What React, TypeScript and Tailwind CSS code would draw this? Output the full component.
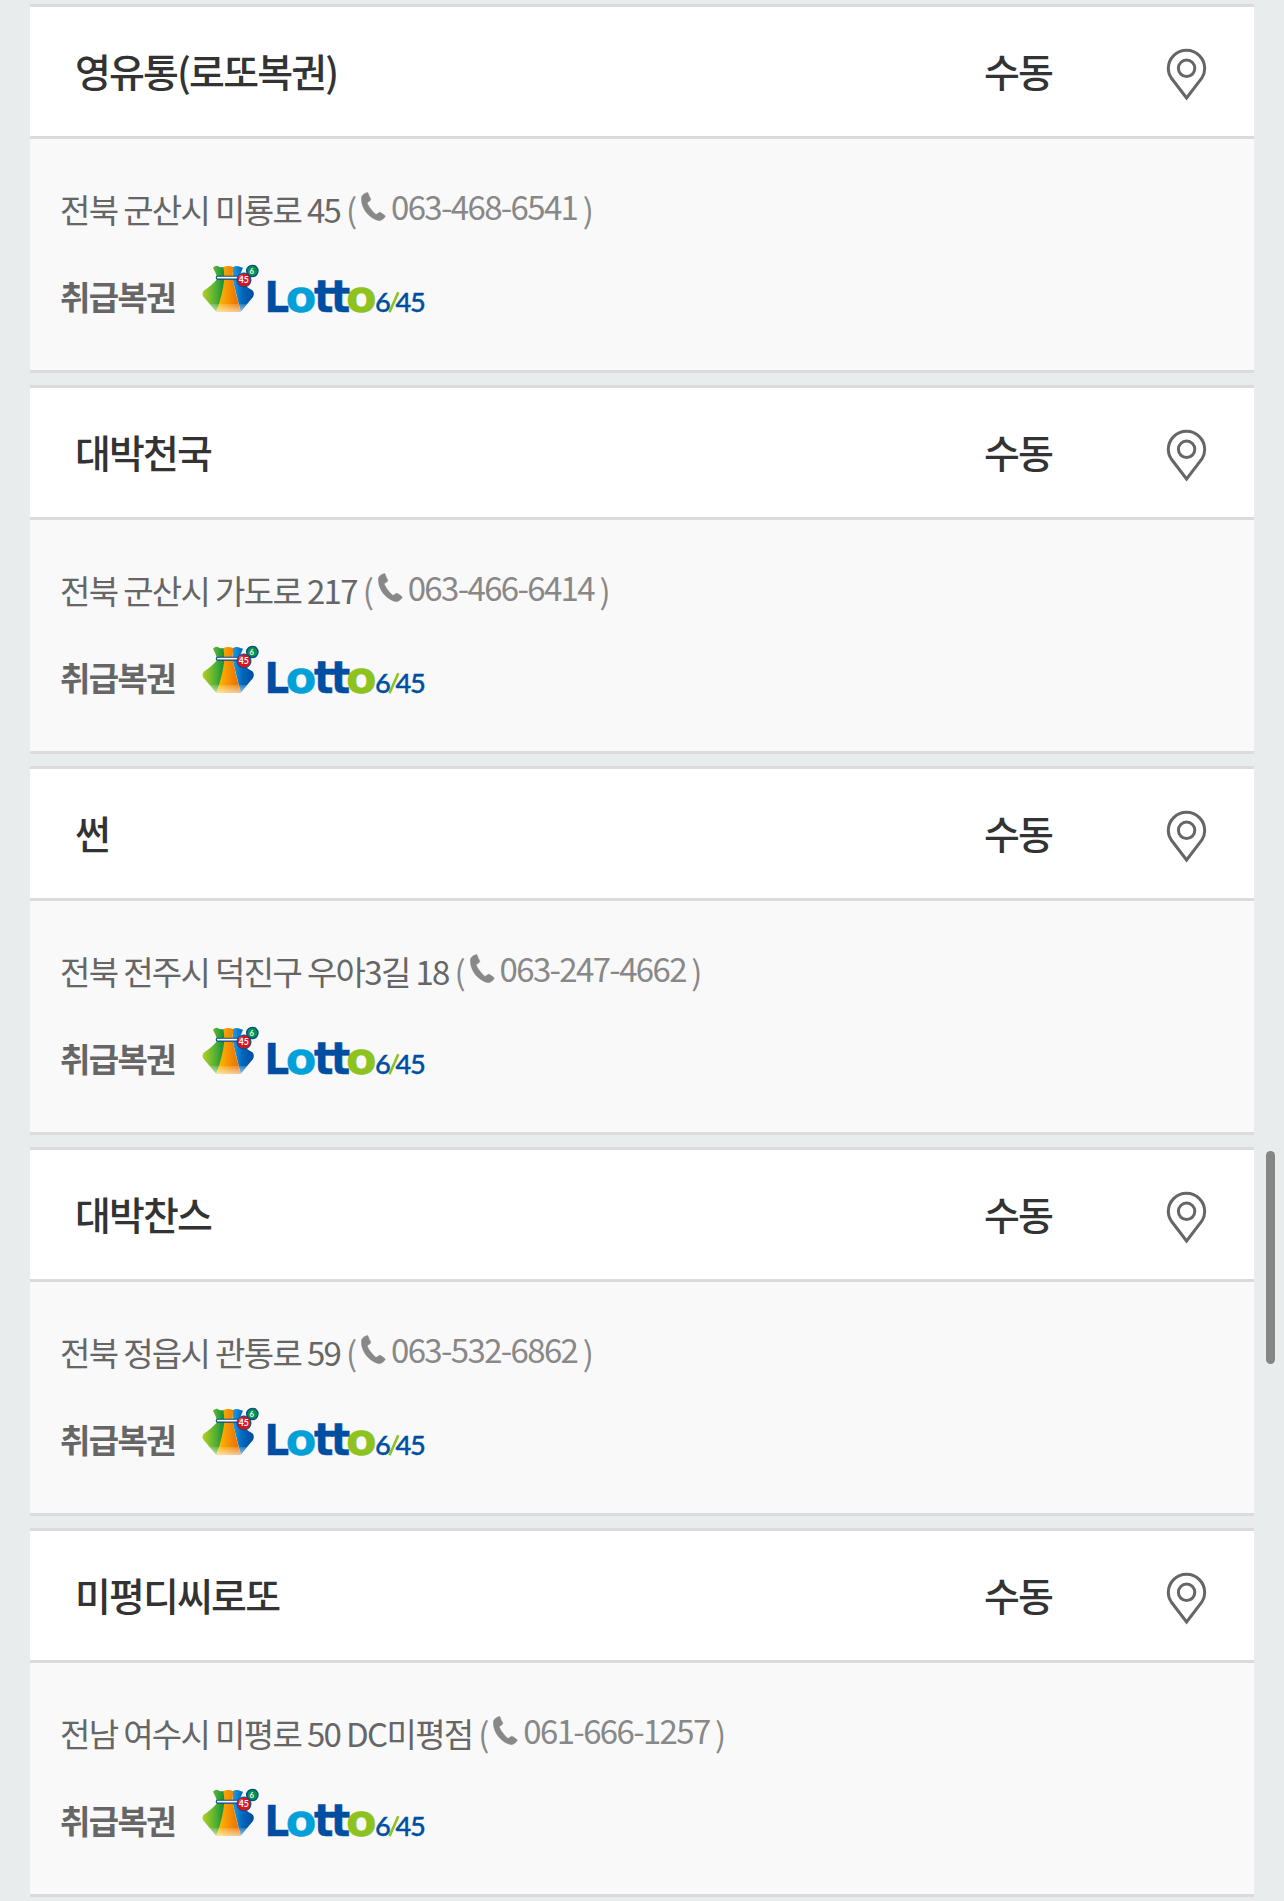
type Store = { name: string; address: string; phone: string };

const stores: Store[] = [
  { name: "영유통(로또복권)", address: "전북 군산시 미룡로 45", phone: "063-468-6541" },
  { name: "대박천국", address: "전북 군산시 가도로 217", phone: "063-466-6414" },
  { name: "썬", address: "전북 전주시 덕진구 우아3길 18", phone: "063-247-4662" },
  { name: "대박찬스", address: "전북 정읍시 관통로 59", phone: "063-532-6862" },
  { name: "미평디씨로또", address: "전남 여수시 미평로 50 DC미평점", phone: "061-666-1257" },
];

function PinIcon() {
  return (
    <svg className="mt-[7px] h-[54px] w-[42px]" viewBox="0 0 42 54" fill="none" stroke="#666" strokeWidth="3">
      <path d="M20.6 50 L5.3 30 C3.2 27 2.3 24 2.3 20.5 A18.2 18.2 0 0 1 38.7 20.5 C38.7 24 37.9 27 35.9 30 Z" />
      <circle cx="20.6" cy="20.3" r="8.2" />
    </svg>
  );
}

function PhoneIcon() {
  return (
    <svg className="mt-[3px] h-[30px] w-[25px] shrink-0" viewBox="33 22 75 90" fill="#888" stroke="#888" strokeWidth="1.5">
      <path d="M34 42 C34 34 39 27 50 24 Q54 22 55 27 C56 32 60 38 62 42 Q63 46 60 48 C56 51 52 52 52 56 C56 66 67 80 76 88 C80 90 83 86 88 83 C93 83 100 89 105 93 Q107 95 104 98 C100 104 94 107 88 108 C65 104 35 80 34 42 Z" />
    </svg>
  );
}

function LottoLogo() {
  return (
    <svg className="h-[64px] w-[232px] overflow-visible" viewBox="0 0 232 64">
      <defs>
        <linearGradient id="bagGreen" x1="0" x2="1">
          <stop offset="0" stopColor="#b4cf22" />
          <stop offset="0.6" stopColor="#4fae35" />
          <stop offset="1" stopColor="#078a3c" />
        </linearGradient>
        <linearGradient id="bagOrange" x1="0" x2="1">
          <stop offset="0" stopColor="#ffc400" />
          <stop offset="0.5" stopColor="#f49200" />
          <stop offset="1" stopColor="#e96a00" />
        </linearGradient>
        <linearGradient id="bagBlue" x1="0" x2="1">
          <stop offset="0" stopColor="#1fa0e6" />
          <stop offset="0.45" stopColor="#0068bd" />
          <stop offset="1" stopColor="#004a9c" />
        </linearGradient>
        <linearGradient id="bagShine" x1="0" x2="0" y1="0" y2="1">
          <stop offset="0" stopColor="#fff" stopOpacity="0.15" />
          <stop offset="1" stopColor="#fff" stopOpacity="0.6" />
        </linearGradient>
      </defs>
      <g transform="translate(0 -4) scale(0.33333)">
        <path d="M39 29 Q48 20 57 26 Q65 30 74 26 L76 60 Q72 110 49 161 L11 117 Q4 108 11 98 Q38 80 52 62 Q48 44 39 29Z" fill="url(#bagGreen)" />
        <path d="M98 28 Q110 20 121 27 L129 29 Q122 46 116 60 Q130 82 157 97 Q165 106 159 117 L122 161 L98 64Z" fill="url(#bagBlue)" />
        <path d="M70 28 Q84 20 100 28 Q97 45 98 62 Q108 110 122 161 H49 Q68 110 73 62 Q73 44 70 28Z" fill="url(#bagOrange)" />
        <path d="M29 138 H141 L122 161 H49Z" fill="url(#bagShine)" />
        <path d="M53 59 H112" stroke="#004a8f" strokeWidth="12" strokeLinecap="round" />
        <path d="M53 59 H112" stroke="#fff" strokeWidth="5" strokeLinecap="round" />
        <circle cx="157" cy="39" r="17" fill="#06924b" stroke="#004a8f" strokeWidth="4" />
        <circle cx="132" cy="66" r="21" fill="#d9141e" stroke="#004a8f" strokeWidth="3" />
        <circle cx="123" cy="57" r="7" fill="#fff" opacity="0.25" />
        <g fill="#fff" fontFamily="Lato" fontWeight="700" textAnchor="middle">
          <text x="155" y="47" fontSize="23" letterSpacing="0">6</text>
          <text x="131" y="75" fontSize="26" letterSpacing="0">45</text>
        </g>
      </g>
      <g fontFamily="DejaVu Sans" fontWeight="700" fill="#004ea2" stroke="#004ea2" strokeWidth="0.4" strokeLinejoin="round" letterSpacing="0">
        <text transform="translate(64.4 50) scale(0.9 1)" fontSize="43">L</text>
        <text transform="translate(114 50) scale(0.92 1)" fontSize="44.3" letterSpacing="-2.9">tt</text>
        <text x="85.8" y="49.6" fontSize="44.6" fill="#00a0d9" stroke="#00a0d9">o</text>
        <text x="145.9" y="49.6" fontSize="44.6" fill="#8dc21f" stroke="#8dc21f">o</text>
      </g>
      <g fontFamily="Lato" fontWeight="500" fill="#004ea2" stroke="#004ea2" strokeWidth="0.35" fontSize="27.3" letterSpacing="0">
        <text x="174.9" y="49.8">6</text>
        <text x="195.4" y="49.8">4</text>
        <text x="209.9" y="49.8">5</text>
      </g>
      <path d="M189.5 50.3 L198.3 30.3" stroke="#8dc21f" strokeWidth="2.6" />
    </svg>
  );
}

function StoreCard({ name, address, phone }: Store) {
  return (
    <article className="border-y-[3px] border-[#dbdbdb] bg-[#f9f9f9]">
      <header className="flex h-[132px] items-center border-b-[3px] border-[#dbdbdb] bg-white pl-[45px] pr-[46px] text-[39px] font-medium tracking-[-1.85px] text-[#333]">
        <h2 className="flex-1 pb-0.5">{name}</h2>
        <span className="w-[182px] pb-0.5">수동</span>
        <PinIcon />
      </header>
      <div className="h-[231px] pl-[30px] pt-[45px] text-[33px] leading-[48px] tracking-[-1.65px] text-[#666]">
        <div className="flex h-[49px] items-center whitespace-pre">
          <span>{address} </span>
          <span className="text-[#888]">(</span>
          <span className="flex items-center gap-[5px] pb-[6px] pl-[5.5px] pr-[5.5px] text-[#888]">
            <PhoneIcon />
            {phone}
          </span>
          <span className="text-[#888]">)</span>
        </div>
        <div className="mt-[29px] flex h-[64px] items-start">
          <strong className="w-[140px] pt-[10px] font-bold">취급복권</strong>
          <LottoLogo />
        </div>
      </div>
    </article>
  );
}

export default function App() {
  return (
    <main className="relative h-[1901px] overflow-hidden bg-[#e8eced] px-[30px] pt-1 font-['Noto_Sans_CJK_KR',sans-serif]">
      <div className="flex flex-col gap-3">
        {stores.map((store) => (
          <StoreCard key={store.name} {...store} />
        ))}
      </div>
      <div className="absolute right-[9px] top-[1151px] h-[213px] w-[9px] rounded-full bg-[#848685]" />
    </main>
  );
}
